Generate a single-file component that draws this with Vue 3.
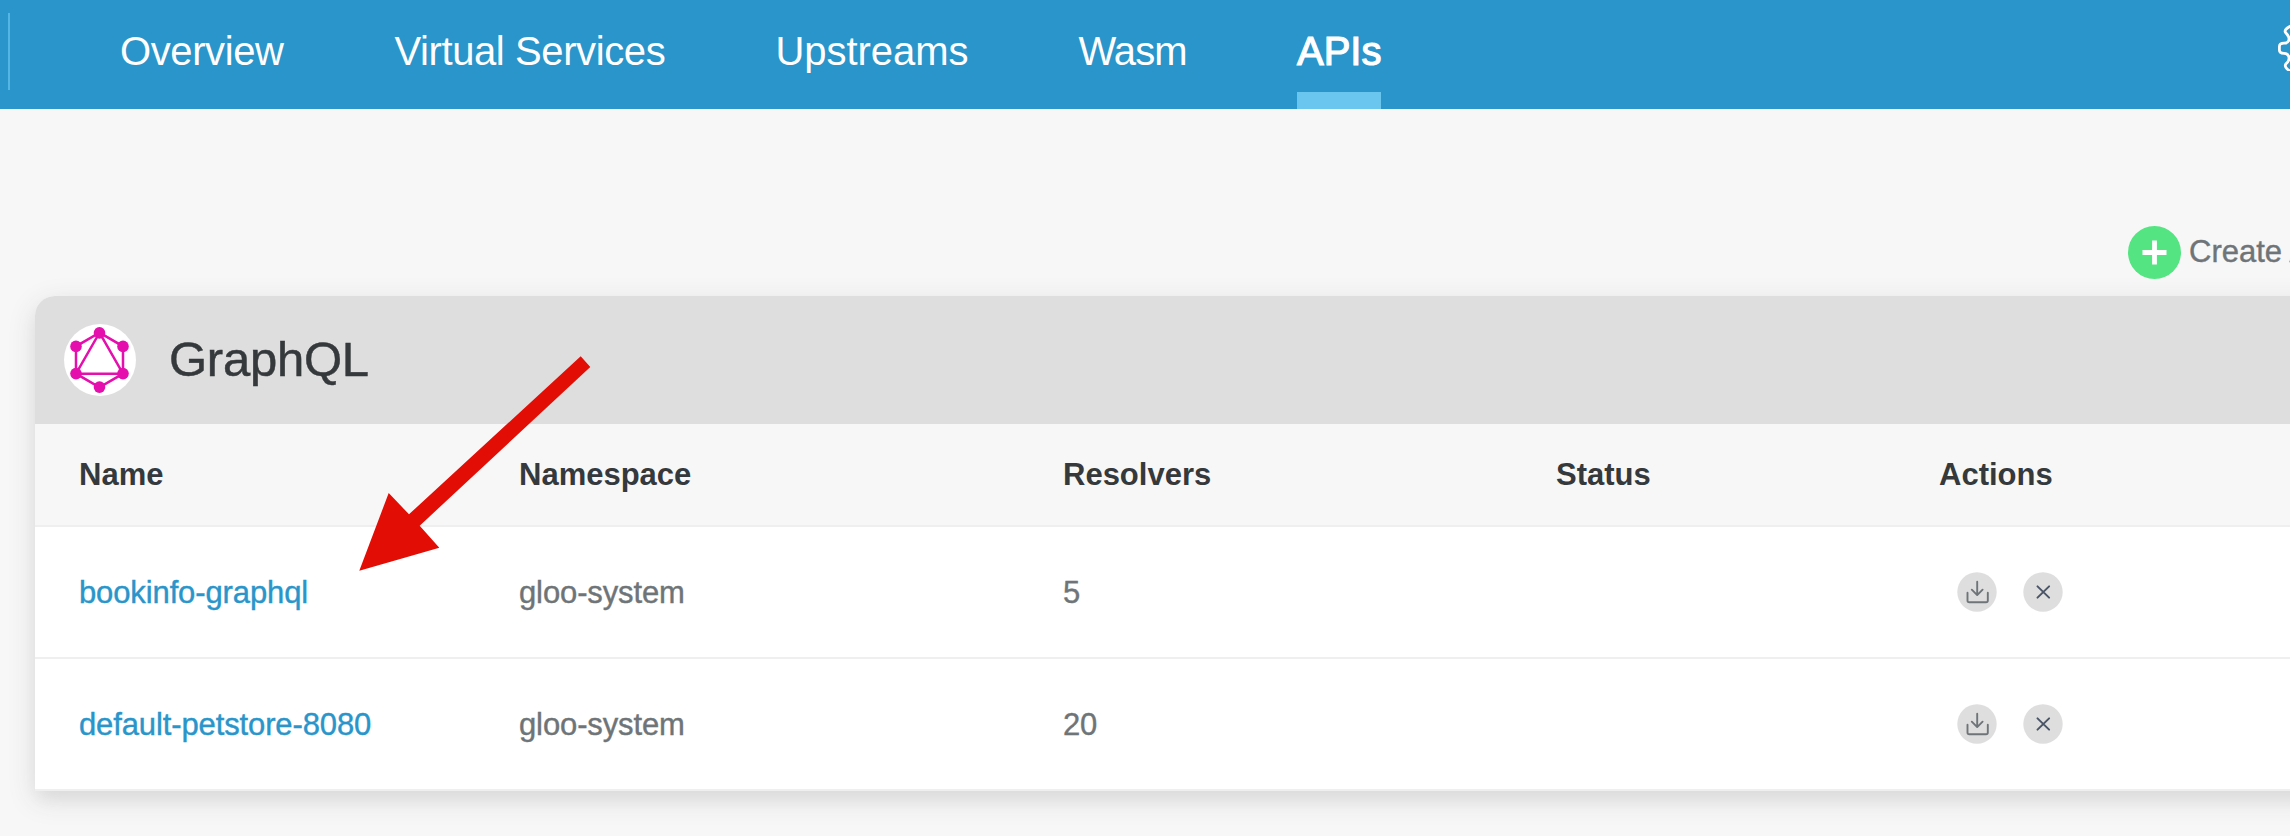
<script setup>
const tabs = [
  { label: 'Overview', cls: 'overview' },
  { label: 'Virtual Services', cls: 'services' },
  { label: 'Upstreams', cls: 'upstreams' },
  { label: 'Wasm', cls: 'wasm' },
  { label: 'APIs', cls: 'active' },
]
const columns = ['Name', 'Namespace', 'Resolvers', 'Status', 'Actions']
const apis = [
  { name: 'bookinfo-graphql', namespace: 'gloo-system', resolvers: 5 },
  { name: 'default-petstore-8080', namespace: 'gloo-system', resolvers: 20 },
]
</script>

<template>
  <div class="page">
    <header class="topbar">
      <span class="divider"></span>
      <nav class="tabs">
        <a v-for="t in tabs" :key="t.label" class="tab" :class="t.cls">{{ t.label }}</a>
      </nav>
      <svg class="gear" viewBox="0 0 52 52" fill="none" stroke="#fff" stroke-width="2.8" stroke-linejoin="round" stroke-linecap="round">
        <path d="M20 2 L14.500 6.500 Q6.500 10.500 8.500 13.500 Q13.500 18.500 11.500 22 Q10.500 24.200 7 24.200 Q2.400 24.200 2.400 27.500 V31 Q2.400 34.300 7 34.300 Q10.500 34.300 11.500 37 Q13.500 40.500 8.800 45 Q6.500 48.500 14.500 53" />
      </svg>
    </header>

    <div class="toolbar">
      <svg class="plus" viewBox="0 0 53 53">
        <circle cx="26.500" cy="26.500" r="26.500" fill="#54e482" />
        <path d="M26.500 14.500v24M14.500 26.500h24" stroke="#fff" stroke-width="4.800" />
      </svg>
      <span class="create">Create API</span>
    </div>

    <section class="card">
      <div class="card-head">
        <svg class="logo" viewBox="0 0 72 72">
          <circle cx="36" cy="36" r="36" fill="#fff" />
          <g fill="none" stroke="#e40fad" stroke-width="2.500">
            <path d="M35.500 8.700 59 22.300V49.700L35.500 63.300 12 49.700V22.300Z" />
            <path d="M35.500 8.700 59 49.700H12Z" />
          </g>
          <g fill="#e40fad">
            <circle cx="35.500" cy="8.900" r="5.800" />
            <circle cx="59" cy="22.400" r="5.800" />
            <circle cx="59" cy="49.600" r="5.800" />
            <circle cx="35.500" cy="63.100" r="5.800" />
            <circle cx="12" cy="49.600" r="5.800" />
            <circle cx="12" cy="22.400" r="5.800" />
          </g>
        </svg>
        <h1>GraphQL</h1>
      </div>
      <div class="row head">
        <span v-for="c in columns" :key="c">{{ c }}</span>
      </div>
      <div v-for="a in apis" :key="a.name" class="row body">
        <a class="cell link">{{ a.name }}</a>
        <span class="cell">{{ a.namespace }}</span>
        <span class="cell">{{ a.resolvers }}</span>
        <span class="cell"></span>
        <div class="actions">
          <svg viewBox="-20 -20 40 40">
            <circle r="19.700" fill="#dedede" />
            <path d="M.2-10.200V2.800M-5.200-2.300.2 3.100 5.600-2.300M-9.500.8V8.400Q-9.500 10.200-7.700 10.200H9Q10.800 10.200 10.800 8.400V.8" fill="none" stroke="#6e7477" stroke-width="1.900" stroke-linecap="round" stroke-linejoin="round" />
          </svg>
          <svg viewBox="-20 -20 40 40">
            <circle r="19.700" fill="#dedede" />
            <path d="M-5.500-5.600 6.100 5.600M6.100-5.600-5.500 5.600" stroke="#4a5568" stroke-width="2" stroke-linecap="round" />
          </svg>
        </div>
      </div>
    </section>

    <svg class="pointer" viewBox="0 0 232 215">
      <polygon points="0.300,214.700 29.700,137 50,158.300 221.700,0.300 231.300,11 60.700,169.700 80.300,191.700" fill="#e20d05" />
    </svg>
  </div>
</template>

<style>
body {
  background: #f7f7f7;
  overflow: hidden;
}
</style>

<style scoped>
.page {
  position: relative;
  box-sizing: border-box;
  width: 2290px;
  height: 836px;
  overflow: hidden;
  background: #f7f7f7;
  font-family: "Liberation Sans", Arial, sans-serif;
  font-size: 31px;
  color: #6e7477;
}
.topbar {
  display: flex;
  height: 109px;
  background: #2995ca;
}
.divider {
  flex: none;
  width: 2px;
  height: 77px;
  margin: 13px 110px 0 8px;
  background: #54b7e3;
}
.tabs {
  flex: none;
  display: grid;
  grid-template-columns: 274.500px 381px 303px 218.500px 83.500px;
  height: 109px;
}
.tab {
  color: #fff;
  font-size: 40px;
  line-height: 46px;
  padding-top: 28px;
  box-sizing: border-box;
  white-space: nowrap;
}
.overview { letter-spacing: -0.400px; }
.services { letter-spacing: -0.400px; }
.upstreams { letter-spacing: -0.050px; }
.wasm { letter-spacing: -0.900px; }
.active {
  border-bottom: 17px solid #6ac5ef;
  -webkit-text-stroke: 1.200px #fff;
}
.gear {
  flex: none;
  width: 52px;
  height: 52px;
  margin: 19px 0 0 896px;
}
.toolbar {
  display: flex;
  align-items: center;
  height: 53px;
  margin: 117px 0 0 2128px;
}
.plus {
  flex: none;
  width: 53px;
  height: 53px;
}
.create {
  margin-left: 8px;
  padding-bottom: 2px;
  white-space: nowrap;
  word-spacing: 0.500px;
  -webkit-text-stroke: 0.400px currentColor;
}
.card {
  width: 2400px;
  margin: 17px 0 0 35px;
  border-radius: 20px 20px 0 0;
  background: #fff;
  box-shadow: 0 8px 28px #dadada, 0 10px 16px -6px #dedede;
}
.card-head {
  display: flex;
  align-items: center;
  height: 128px;
  padding-left: 29px;
  border-radius: 20px 20px 0 0;
  background: #dedede;
}
.logo {
  width: 72px;
  height: 72px;
}
h1 {
  margin: 0 0 0 33px;
  padding-bottom: 3px;
  font-size: 49px;
  line-height: 56px;
  font-weight: 400;
  letter-spacing: -0.250px;
  color: #35393b;
  -webkit-text-stroke: 0.500px currentColor;
}
.row {
  display: grid;
  grid-template-columns: 440px 544px 493px 383px 300px;
  align-items: center;
  box-sizing: border-box;
  padding-left: 44px;
  border-bottom: 2px solid #efefef;
  line-height: 36px;
}
.head {
  height: 103px;
  background: #f7f7f7;
  font-weight: 700;
  color: #35393b;
}
.body {
  height: 132px;
}
.cell {
  padding-top: 2px;
  letter-spacing: -0.120px;
  -webkit-text-stroke: 0.400px currentColor;
}
.link {
  color: #2995ca;
}
.actions {
  display: flex;
  gap: 26px;
  padding-left: 17.500px;
}
.actions svg {
  width: 40px;
  height: 40px;
}
.pointer {
  position: absolute;
  left: 359px;
  top: 356px;
  width: 232px;
  height: 215px;
}
</style>
